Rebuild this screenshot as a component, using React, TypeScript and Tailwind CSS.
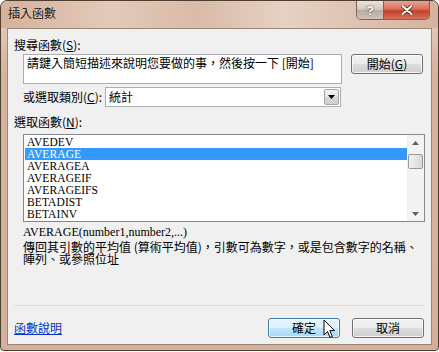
import React from "react";

const cjk = { fontFamily: '"Noto Sans CJK TC", "Noto Sans", sans-serif' };
const serif = { fontFamily: '"Liberation Serif", "DejaVu Serif", serif' };

const items = ["AVEDEV", "AVERAGE", "AVERAGEA", "AVERAGEIF", "AVERAGEIFS", "BETADIST", "BETAINV"];

function WinButton({ children, hot }: { children: React.ReactNode; hot?: boolean }) {
  return (
    <div
      className={
        "w-[72px] h-[20px] rounded-[3px] border flex items-center justify-center text-[12px] text-black shadow-[inset_0_0_0_1px_rgba(255,255,255,0.7)] " +
        (hot
          ? "border-[#3c7fb1] bg-[linear-gradient(to_bottom,#eaf6fd_0%,#d9f0fc_50%,#bee6fd_51%,#a7d9f5_100%)]"
          : "border-[#707070] bg-[linear-gradient(to_bottom,#f2f2f2_0%,#ebebeb_50%,#dddddd_51%,#cfcfcf_100%)]")
      }
      style={cjk}
    >
      {children}
    </div>
  );
}

export default function App() {
  return (
    <div className="w-[439px] h-[352px] bg-white">
      <div className="relative w-[439px] h-[351px] rounded-t-[7px] rounded-b-[4px] border border-[#4e3e34] bg-[linear-gradient(to_bottom,#d9b7a2_0%,#e2c7b6_8%,#d6b39e_20%,#d3b09b_100%)] flex flex-col overflow-hidden">
        {/* title bar */}
        <div className="h-[27px] flex items-start bg-[linear-gradient(to_right,#d5b29c_0%,#e3cab9_25%,#d9bba7_45%,#e6d1c3_65%,#d5b39e_100%)]">
          <div className="pl-[7px] pt-[5px] text-[12px] leading-[14px] text-[#222]" style={cjk}>
            插入函數
          </div>
          <div className="ml-auto mr-[8px] flex h-[19px] rounded-b-[5px] border border-t-0 border-[#7a6658] overflow-hidden">
            <div className="w-[27px] h-full flex items-center justify-center bg-[linear-gradient(to_bottom,#e9e3de_0%,#d2c7bf_50%,#b9aba1_51%,#cfc3ba_100%)] border-r border-[#7a6658]">
              <span className="text-[13px] font-bold text-white leading-none [text-shadow:0_0_2px_#555,0_0_1px_#333]" style={{ fontFamily: '"Liberation Sans", sans-serif' }}>
                ?
              </span>
            </div>
            <div className="w-[45px] h-full flex items-center justify-center bg-[linear-gradient(to_bottom,#e8a493_0%,#d7705c_45%,#c2412a_55%,#d9705a_100%)]">
              <svg width="12" height="10" viewBox="0 0 12 10">
                <path d="M1.5 1 L10.5 9 M10.5 1 L1.5 9" stroke="#5a2a20" strokeWidth="3.6" strokeLinecap="round" />
                <path d="M1.5 1 L10.5 9 M10.5 1 L1.5 9" stroke="#ffffff" strokeWidth="2" strokeLinecap="round" />
              </svg>
            </div>
          </div>
        </div>

        {/* client area */}
        <div className="mx-[6px] h-[317px] border border-[#9a8474] bg-[#f0f0f0] flex flex-col text-black" style={cjk}>
          <div className="pl-[6px] mt-[9px] text-[12px] leading-[14px]">
            搜尋函數(<span className="underline">S</span>):
          </div>
          <div className="flex items-start mt-[2px] ml-[15px]">
            <div className="w-[319px] h-[30px] border border-[#abadb3] bg-white pl-[3px] pt-[1px] text-[12px] leading-[14px] whitespace-nowrap">
              請鍵入簡短描述來說明您要做的事，然後按一下 [開始]
            </div>
            <div className="ml-[9px]">
              <WinButton>
                開始(<span className="underline">G</span>)
              </WinButton>
            </div>
          </div>
          <div className="flex items-center mt-[3px] ml-[15px]">
            <div className="w-[82px] text-[12px] leading-[14px] whitespace-nowrap">
              或選取類別(<span className="underline">C</span>):
            </div>
            <div className="w-[236px] h-[20px] border border-[#abadb3] bg-white flex items-center">
              <div className="pl-[3px] text-[12px] leading-[14px]">統計</div>
              <div className="ml-auto mr-[1px] w-[15px] h-[16px] border border-[#a5a5a5] rounded-[2px] bg-[linear-gradient(to_bottom,#f2f2f2_0%,#e6e6e6_50%,#d6d6d6_51%,#cfcfcf_100%)] flex items-center justify-center">
                <svg width="7" height="4" viewBox="0 0 7 4">
                  <path d="M0 0 L7 0 L3.5 4 Z" fill="#000" />
                </svg>
              </div>
            </div>
          </div>
          <div className="pl-[6px] mt-[8px] text-[12px] leading-[14px]">
            選取函數(<span className="underline">N</span>):
          </div>
          <div className="ml-[15px] mt-[5px] w-[402px] h-[88px] border border-[#828790] bg-white flex">
            <div className="flex-1 pt-[1px] pl-[1px]">
              {items.map((it, i) => (
                <div
                  key={it}
                  className={
                    "h-[12px] leading-[12px] pl-[2px] text-[11.5px] tracking-[0.1px] " +
                    (i === 1 ? "bg-[#3399ff] text-white" : "text-black")
                  }
                  style={serif}
                >
                  {it}
                </div>
              ))}
            </div>
            <div className="w-[17px] h-full bg-[#f3f3f3] flex flex-col items-center">
              <div className="h-[15px] flex items-center justify-center">
                <svg width="7" height="4" viewBox="0 0 7 4">
                  <path d="M0 4 L7 4 L3.5 0 Z" fill="#606060" />
                </svg>
              </div>
              <div className="w-[15px] h-[15px] mt-[4px] rounded-[2px] border border-[#9a9a9a] bg-[linear-gradient(to_right,#f0f0f0_0%,#e4e4e4_50%,#d7d7d7_100%)]" />
              <div className="mt-auto h-[15px] flex items-center justify-center">
                <svg width="7" height="4" viewBox="0 0 7 4">
                  <path d="M0 0 L7 0 L3.5 4 Z" fill="#606060" />
                </svg>
              </div>
            </div>
          </div>
          <div className="ml-[15px] mt-[3px] text-[12px] leading-[14px] whitespace-nowrap" style={serif}>
            AVERAGE(number1,number2,...)
          </div>
          <div className="ml-[15px] mt-[2px] text-[12px] leading-[12px] whitespace-nowrap">
            <div>傳回其引數的平均值 (算術平均值)，引數可為數字，或是包含數字的名稱、</div>
            <div>陣列、或參照位址</div>
          </div>
          <div className="flex-1" />
          <div className="mx-[6px] h-px bg-[#dcdcdc]" />
          <div className="flex items-center mt-[12px] mb-[6px] pl-[6px] pr-[7px]">
            <div className="text-[12px] leading-[14px] text-[#0033cc] underline">函數說明</div>
            <div className="ml-auto flex gap-[12px]">
              <WinButton hot>確定</WinButton>
              <WinButton>取消</WinButton>
            </div>
          </div>
        </div>

        {/* mouse cursor */}
        <svg className="absolute left-[322px] top-[318px]" width="13" height="21" viewBox="0 0 13 21">
          <path
            d="M1 1 L1 16 L4.5 12.5 L7 18.5 L9.3 17.5 L6.8 11.6 L11.5 11.6 Z"
            fill="#ffffff"
            stroke="#000000"
            strokeWidth="1"
            strokeLinejoin="round"
          />
        </svg>
      </div>
    </div>
  );
}
